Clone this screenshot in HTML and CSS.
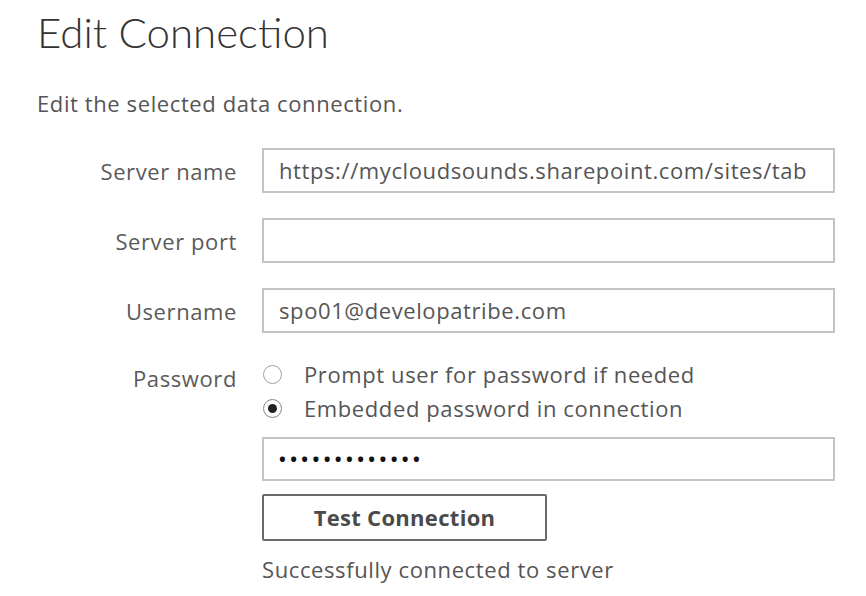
FILE: index.html
```html
<!DOCTYPE html>
<html>
<head>
<meta charset="utf-8">
<link rel="stylesheet" href="styles.css">
</head>
<body>
<div class="page">
  <h1 class="title">Edit Connection</h1>
  <p class="subtitle">Edit the selected data connection.</p>
  <div class="form">
    <label class="label">Server name</label>
    <div class="field"><div class="input"><div class="value">https://mycloudsounds.sharepoint.com/sites/tab</div></div></div>
    <label class="label">Server port</label>
    <div class="field"><div class="input"><div class="value"></div></div></div>
    <label class="label">Username</label>
    <div class="field"><div class="input"><div class="value">spo01@developatribe.com</div></div></div>
    <label class="label label-top">Password</label>
    <div class="field pw">
      <div class="radio-row"><span class="radio"></span><span>Prompt user for password if needed</span></div>
      <div class="radio-row"><span class="radio checked"></span><span>Embedded password in connection</span></div>
      <div class="input input-pw"><div class="value dots">•••••••••••••</div></div>
      <div class="button">Test Connection</div>
      <div class="status">Successfully connected to server</div>
    </div>
  </div>
</div>
</body>
</html>
```
FILE: styles.css
```css
html, body {
  margin: 0;
  padding: 0;
  background: #fff;
}
.page {
  padding-left: 37px;
  font-family: "Open Sans", Lato, sans-serif;
  color: #555;
  letter-spacing: 0.6px;
}
.title {
  margin: 0;
  padding-top: 8px;
  font-family: Lato, "Open Sans", sans-serif;
  font-weight: 300;
  font-size: 42px;
  line-height: 48px;
  letter-spacing: 0;
  color: #333;
}
.subtitle {
  margin: 34px 0 0 0;
  font-size: 22px;
  line-height: 26px;
  color: #555;
}
.form {
  display: grid;
  grid-template-columns: 200px 573px;
  column-gap: 25px;
  row-gap: 25px;
  margin-top: 32px;
  align-items: center;
}
.label {
  text-align: right;
  font-size: 22px;
  color: #5a5a5a;
}
.label-top {
  align-self: start;
  margin-top: 5px;
}
.input {
  box-sizing: border-box;
  height: 45px;
  border: 2px solid #c4c4c4;
  padding: 0 13px 0 15px;
  font-size: 22px;
  line-height: 41px;
  color: #555;
}
.value {
  white-space: nowrap;
  overflow: hidden;
  height: 41px;
}
.pw {
  display: flex;
  flex-direction: column;
  align-self: start;
  margin-top: -1px;
}
.radio-row {
  display: flex;
  align-items: center;
  height: 34px;
  font-size: 22px;
  color: #555;
}
.radio {
  box-sizing: border-box;
  width: 19px;
  height: 19px;
  border: 1.5px solid #a0a0a0;
  border-radius: 50%;
  margin: 0 22px 0 1px;
  display: flex;
  align-items: center;
  justify-content: center;
}
.radio.checked {
  border-color: #888;
}
.radio.checked::after {
  content: "";
  width: 9px;
  height: 9px;
  border-radius: 50%;
  background: #222;
}
.input-pw {
  margin-top: 12px;
  height: 44px;
}
.dots {
  font-size: 18px;
  letter-spacing: 4.4px;
  color: #111;
  line-height: 40px;
  font-weight: 700;
}
.button {
  box-sizing: border-box;
  width: 285px;
  height: 47px;
  margin-top: 13px;
  border: 2px solid #6a6a6a;
  border-radius: 2px;
  font-weight: 700;
  font-size: 22px;
  letter-spacing: 0.3px;
  line-height: 43px;
  text-align: center;
  color: #4a4a4a;
}
.status {
  margin-top: 14px;
  font-size: 22px;
  line-height: 28px;
  color: #555;
}
```
